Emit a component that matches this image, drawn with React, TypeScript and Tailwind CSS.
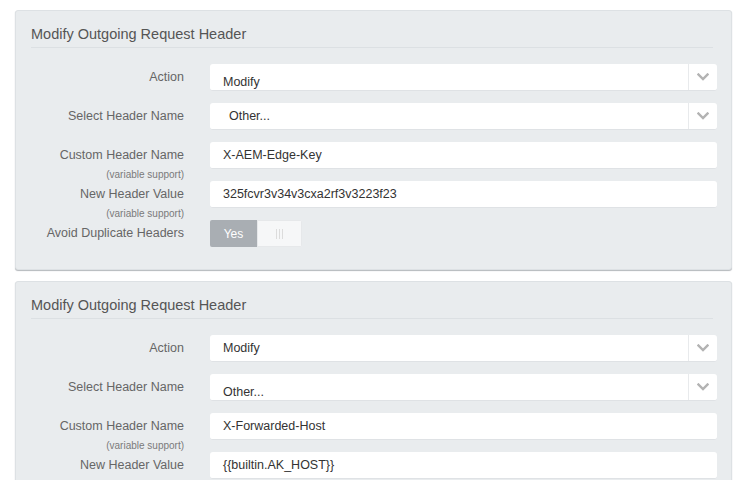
import { ReactNode } from 'react';

const font = { fontFamily: '"Liberation Sans", Arial, Helvetica, sans-serif' };

function Chevron() {
  return (
    <svg width="12" height="8" viewBox="0 0 12 8" fill="none">
      <path d="M1.5 1.5 L6 6 L10.5 1.5" stroke="#b3b3b3" strokeWidth="2.4" strokeLinecap="square" />
    </svg>
  );
}

interface RowProps {
  label: string;
  sub?: boolean;
  children: ReactNode;
}

function Row({ label, sub, children }: RowProps) {
  return (
    <div className="flex items-start">
      <div className="w-[168px] h-[27px] flex flex-col items-end text-right">
        <span className="text-[12.5px] leading-[27px] text-[#666]">{label}</span>
        {sub && <span className="text-[10px] leading-[12px] text-[#7a7a7a]">(variable support)</span>}
      </div>
      <div className="ml-[26px] flex-1">{children}</div>
    </div>
  );
}

function SelectBox({ value, textClass = '' }: { value: string; textClass?: string }) {
  return (
    <div className="flex h-[27px] bg-white rounded-[3px] border-b border-[#dfe2e5]">
      <div className={`flex-1 pl-[13px] text-[12.5px] text-[#333] leading-[27px] ${textClass}`}>{value}</div>
      <div className="w-[29px] border-l border-[#e8eaec] flex items-center justify-center">
        <Chevron />
      </div>
    </div>
  );
}

function TextBox({ value }: { value: string }) {
  return (
    <div className="h-[27px] bg-white rounded-[3px] border-b border-[#dfe2e5] pl-[13px] text-[12.5px] text-[#333] leading-[27px]">
      {value}
    </div>
  );
}

function Toggle() {
  return (
    <div className="flex w-[92px] h-[27px] rounded-[2px] overflow-hidden">
      <div className="w-[47px] bg-[#a9aeb3] text-white text-[12px] flex items-center justify-center">Yes</div>
      <div className="flex-1 bg-[#f6f7f8] border border-[#e6e8ea] flex items-center justify-center gap-[2px]">
        <span className="w-px h-[10px] bg-[#dcdcdc]" />
        <span className="w-px h-[10px] bg-[#dcdcdc]" />
        <span className="w-px h-[10px] bg-[#dcdcdc]" />
      </div>
    </div>
  );
}

function Panel({ children }: { children: ReactNode }) {
  return (
    <div className="bg-[#e9ecee] border border-[#dde1e4] rounded-[3px] shadow-[0_1px_1px_#b4b8bc] pb-[22px] shrink-0">
      <div className="pl-[15px] pt-[13px] text-[14.5px] leading-[20px] text-[#555]">Modify Outgoing Request Header</div>
      <div className="ml-[15px] mr-[18px] mt-[3px] h-px bg-[#dce0e3]" />
      <div className="pt-[16px] pr-[14px] flex flex-col gap-[12px]">{children}</div>
    </div>
  );
}

export default function App() {
  return (
    <div className="w-[750px] h-[489px] bg-white" style={font}>
      <div className="h-[480px] overflow-hidden pt-[10px] pl-[15px] pr-[18px] flex flex-col gap-[11px]">
        <Panel>
          <Row label="Action">
            <SelectBox value="Modify" textClass="pt-[5px] leading-[22px]" />
          </Row>
          <Row label="Select Header Name">
            <SelectBox value="Other..." textClass="pl-[19px]" />
          </Row>
          <Row label="Custom Header Name" sub>
            <TextBox value="X-AEM-Edge-Key" />
          </Row>
          <Row label="New Header Value" sub>
            <TextBox value="325fcvr3v34v3cxa2rf3v3223f23" />
          </Row>
          <Row label="Avoid Duplicate Headers">
            <Toggle />
          </Row>
        </Panel>
        <Panel>
          <Row label="Action">
            <SelectBox value="Modify" />
          </Row>
          <Row label="Select Header Name">
            <SelectBox value="Other..." textClass="pt-[5px] leading-[22px]" />
          </Row>
          <Row label="Custom Header Name" sub>
            <TextBox value="X-Forwarded-Host" />
          </Row>
          <Row label="New Header Value">
            <TextBox value="{{builtin.AK_HOST}}" />
          </Row>
        </Panel>
      </div>
    </div>
  );
}
